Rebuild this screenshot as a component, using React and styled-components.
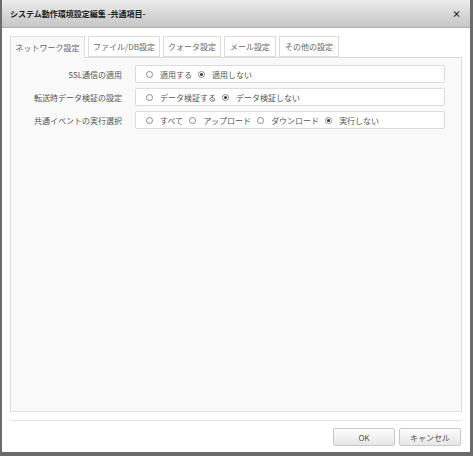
import React, { useState } from 'react'
import styled, { createGlobalStyle } from 'styled-components'

const Global = createGlobalStyle`
  html, body { margin: 0; padding: 0; background: #fff; }
  body { font-family: "Noto Sans CJK JP", "Noto Sans", sans-serif; font-size: 8px; color: #444; }
`

const Frame = styled.div`
  box-sizing: border-box;
  width: 473px;
  height: 456px;
  border: 2px solid #6b6b6b;
  border-top: 0;
  border-bottom-width: 4px;
  border-right-width: 3px;
  display: flex;
  flex-direction: column;
  background: #fff;
`

const TitleBar = styled.div`
  box-sizing: border-box;
  height: 28px;
  flex: none;
  display: flex;
  align-items: center;
  justify-content: space-between;
  padding: 0 9px 0 8px;
  background: linear-gradient(#ececec, #c6c6c6);
  border-bottom: 1px solid #b0b0b0;
  font-weight: bold;
  font-size: 8px;
  color: #222;
`

const Close = styled.span`
  font-size: 9px;
  font-weight: bold;
  color: #222;
`

const Body = styled.div`
  flex: 1;
  display: flex;
  flex-direction: column;
  padding: 8px 8px 0 8px;
`

const Tabs = styled.div`
  display: flex;
  gap: 3px;
  height: 21px;
  position: relative;
  z-index: 1;
`

const Tab = styled.div`
  box-sizing: border-box;
  height: ${p => (p.$active ? '22px' : '21px')};
  width: ${p => p.$w}px;
  display: flex;
  align-items: center;
  justify-content: center;
  border: 1px solid #dcdcdc;
  border-bottom: ${p => (p.$active ? '0' : '1px solid #dcdcdc')};
  background: ${p => (p.$active ? '#f9f9f9' : '#fff')};
  color: #666;
  cursor: pointer;
`

const Panel = styled.div`
  box-sizing: border-box;
  height: 355px;
  flex: none;
  background: #f9f9f9;
  border: 1px solid #dcdcdc;
  padding: 7px 16px 0 0;
  display: flex;
  flex-direction: column;
  gap: 5px;
`

const Row = styled.div`
  display: grid;
  grid-template-columns: 124px 1fr;
  align-items: center;
`

const Label = styled.div`
  text-align: right;
  padding-right: 13px;
  color: #555;
`

const Field = styled.div`
  box-sizing: border-box;
  height: 18px;
  background: #fff;
  border: 1px solid #dcdcdc;
  border-radius: 2px;
  display: flex;
  align-items: center;
  padding-left: 10px;
  gap: 6px;
`

const Option = styled.label`
  display: flex;
  align-items: center;
  gap: 7px;
  color: #555;
  cursor: pointer;
`

const Radio = styled.span`
  box-sizing: border-box;
  width: 7px;
  height: 7px;
  border-radius: 50%;
  border: 1px solid #8a8a8a;
  background: #fff;
  display: flex;
  align-items: center;
  justify-content: center;
  &::after {
    content: '';
    width: 3px;
    height: 3px;
    border-radius: 50%;
    background: ${p => (p.$on ? '#333' : 'transparent')};
  }
`

const Footer = styled.div`
  margin-top: 8px;
  border-top: 1px solid #e6e6e6;
  display: flex;
  justify-content: flex-end;
  gap: 4px;
  padding: 7px 1px 0 0;
`

const Button = styled.button`
  box-sizing: border-box;
  width: 62px;
  height: 18px;
  border: 1px solid #c8c8c8;
  border-radius: 2px;
  background: linear-gradient(#fdfdfd, #e6e6e6);
  font-family: inherit;
  font-size: 8px;
  color: #555;
  padding: 0;
  cursor: pointer;
`

const tabs = [
  ['ネットワーク設定', 75],
  ['ファイル/DB設定', 72],
  ['クォータ設定', 58],
  ['メール設定', 52],
  ['その他の設定', 60],
]

const rows = [
  { label: 'SSL通信の適用', options: ['適用する', '適用しない'], value: 1 },
  { label: '転送時データ検証の設定', options: ['データ検証する', 'データ検証しない'], value: 1 },
  { label: '共通イベントの実行選択', options: ['すべて', 'アップロード', 'ダウンロード', '実行しない'], value: 3 },
]

export default function App() {
  const [values, setValues] = useState(rows.map(r => r.value))
  const [tab, setTab] = useState(0)

  return (
    <>
      <Global />
      <Frame>
        <TitleBar>
          <span>システム動作環境設定編集 -共通項目-</span>
          <Close>×</Close>
        </TitleBar>
        <Body>
          <Tabs>
            {tabs.map(([t, w], i) => (
              <Tab key={t} $w={w} $active={i === tab} onClick={() => setTab(i)}>{t}</Tab>
            ))}
          </Tabs>
          <Panel>
            {rows.map((r, ri) => (
              <Row key={r.label}>
                <Label>{r.label}</Label>
                <Field>
                  {r.options.map((o, oi) => (
                    <Option key={o} onClick={() => setValues(v => v.map((x, k) => (k === ri ? oi : x)))}>
                      <Radio $on={values[ri] === oi} />
                      {o}
                    </Option>
                  ))}
                </Field>
              </Row>
            ))}
          </Panel>
          <Footer>
            <Button>OK</Button>
            <Button>キャンセル</Button>
          </Footer>
        </Body>
      </Frame>
    </>
  )
}
